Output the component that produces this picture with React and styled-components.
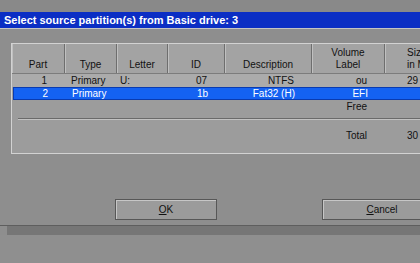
import React from 'react';
import styled, { createGlobalStyle } from 'styled-components';

const GlobalStyle = createGlobalStyle`
  html, body {
    margin: 0;
    padding: 0;
    background: #8b8b8b;
    overflow: hidden;
  }
  body {
    font-family: 'Liberation Sans', Arial, sans-serif;
  }
  * {
    box-sizing: border-box;
  }
`;

const Screen = styled.div`
  width: 420px;
  height: 263px;
  overflow: hidden;
  display: flex;
  flex-direction: column;
  background: #8b8b8b;
`;

const TopStrip = styled.div`
  height: 12px;
  flex-shrink: 0;
  background: #898989;
`;

const TitleBar = styled.div`
  height: 17px;
  flex-shrink: 0;
  background: #0b2ec4;
  color: #ffffff;
  font-weight: bold;
  font-size: 11px;
  line-height: 16px;
  padding-left: 4px;
  white-space: nowrap;
  border-bottom: 1px solid #c4c4c4;
`;

const Body = styled.div`
  flex: 1;
  display: flex;
  flex-direction: column;
  background: #8e8e8e;
  padding: 14px 0 0 11px;
`;

const Panel = styled.div`
  width: 470px;
  height: 111px;
  flex-shrink: 0;
  background: #9c9c9c;
  border-top: 1px solid #d2d2d2;
  border-left: 1px solid #d2d2d2;
  border-bottom: 1px solid #d2d2d2;
  display: flex;
  flex-direction: column;
`;

const cols = '53px 52px 51px 57px 87px 73px 96px';

const HeaderRow = styled.div`
  display: grid;
  grid-template-columns: ${cols};
  height: 30px;
  background: #a3a3a3;
  border-bottom: 1px solid #7c7c7c;
`;

const HeadCell = styled.div`
  display: flex;
  flex-direction: column;
  justify-content: flex-end;
  align-items: ${(p) => p.align || 'center'};
  padding: 0 6px 2px ${(p) => (p.align === 'flex-start' ? '22px' : '6px')};
  font-size: 10px;
  line-height: 12px;
  color: #111;
  border-right: 1px solid #6e6e6e;
  box-shadow: inset 1px 0 0 #c0c0c0;
  white-space: nowrap;
`;

const Row = styled.div`
  display: grid;
  grid-template-columns: ${cols};
  height: 13px;
  flex-shrink: 0;
  background: ${(p) => (p.selected ? '#1462f2' : p.light ? '#ababab' : 'transparent')};
  color: ${(p) => (p.selected ? '#ffffff' : '#111111')};
  margin: ${(p) => (p.selected ? '0 0 0 1px' : '0')};
  margin-top: ${(p) => (p.gap ? `${p.gap}px` : p.selected ? '0' : '0')};
  box-shadow: ${(p) => (p.selected ? 'inset 0 0 0 1px #0a3bb0' : 'none')};
`;

const Cell = styled.div`
  font-size: 10px;
  line-height: 13px;
  text-align: ${(p) => p.align || 'left'};
  padding: 0 ${(p) => (p.align === 'right' ? '18px' : '4px')} 0 ${(p) => p.indent || 4}px;
  white-space: nowrap;
  overflow: hidden;
`;

const Divider = styled.div`
  margin: 5px 0 0 6px;
  height: 2px;
  flex-shrink: 0;
  background: #6a6a6a;
  border-bottom: 1px solid #c2c2c2;
`;

const ButtonRow = styled.div`
  display: flex;
  gap: 105px;
  margin: 45px 0 0 104px;
`;

const Button = styled.div`
  width: ${(p) => p.w}px;
  height: 21px;
  flex-shrink: 0;
  background: #9b9b9b;
  border: 1px solid #575757;
  box-shadow: inset 1px 1px 0 #c6c6c6;
  font-size: 10px;
  line-height: 19px;
  text-align: center;
  color: #111;
  span {
    text-decoration: underline;
  }
`;

const FooterLine = styled.div`
  margin-top: 5px;
  margin-left: -11px;
  height: 1px;
  background: #5e5e5e;
`;

const FooterBand = styled.div`
  margin-left: -4px;
  height: 9px;
  background: #767676;
`;

const Bottom = styled.div`
  flex: 1;
  margin-left: -11px;
  background: #8f8f8f;
`;

const columns = [
  { key: 'part', head: ['Part'], align: 'right' },
  { key: 'type', head: ['Type'], align: 'left', indent: 6 },
  { key: 'letter', head: ['Letter'], align: 'left', indent: 3 },
  { key: 'id', head: ['ID'], align: 'right' },
  { key: 'desc', head: ['Description'], align: 'right' },
  { key: 'label', head: ['Volume', 'Label'], align: 'right' },
  { key: 'size', head: ['Size', 'in MB'], align: 'left', indent: 22 },
];

const rows = [
  { part: '1', type: 'Primary', letter: 'U:', id: '07', desc: 'NTFS', label: 'ou', size: '29', light: true },
  { part: '2', type: 'Primary', letter: '', id: '1b', desc: 'Fat32 (H)', label: 'EFI', size: '', selected: true },
  { part: '', type: '', letter: '', id: '', desc: '', label: 'Free', size: '' },
];

export default function App() {
  return (
    <Screen>
      <GlobalStyle />
      <TopStrip />
      <TitleBar>Select source partition(s) from Basic drive: 3</TitleBar>
      <Body>
        <Panel>
          <HeaderRow>
            {columns.map((c) => (
              <HeadCell key={c.key} align={c.key === 'size' ? 'flex-start' : 'center'}>
                {c.head.map((h) => (
                  <div key={h}>{h}</div>
                ))}
              </HeadCell>
            ))}
          </HeaderRow>
          {rows.map((r, i) => (
            <Row key={i} selected={r.selected} light={r.light}>
              {columns.map((c) => (
                <Cell key={c.key} align={c.align} indent={c.indent}>
                  {r[c.key]}
                </Cell>
              ))}
            </Row>
          ))}
          <Divider />
          <Row gap={9}>
            {columns.map((c) => (
              <Cell key={c.key} align={c.align} indent={c.indent}>
                {c.key === 'label' ? 'Total' : c.key === 'size' ? '30' : ''}
              </Cell>
            ))}
          </Row>
        </Panel>
        <ButtonRow>
          <Button w={102}>
            <span>O</span>K
          </Button>
          <Button w={120}>
            <span>C</span>ancel
          </Button>
        </ButtonRow>
        <FooterLine />
        <FooterBand />
        <Bottom />
      </Body>
    </Screen>
  );
}
